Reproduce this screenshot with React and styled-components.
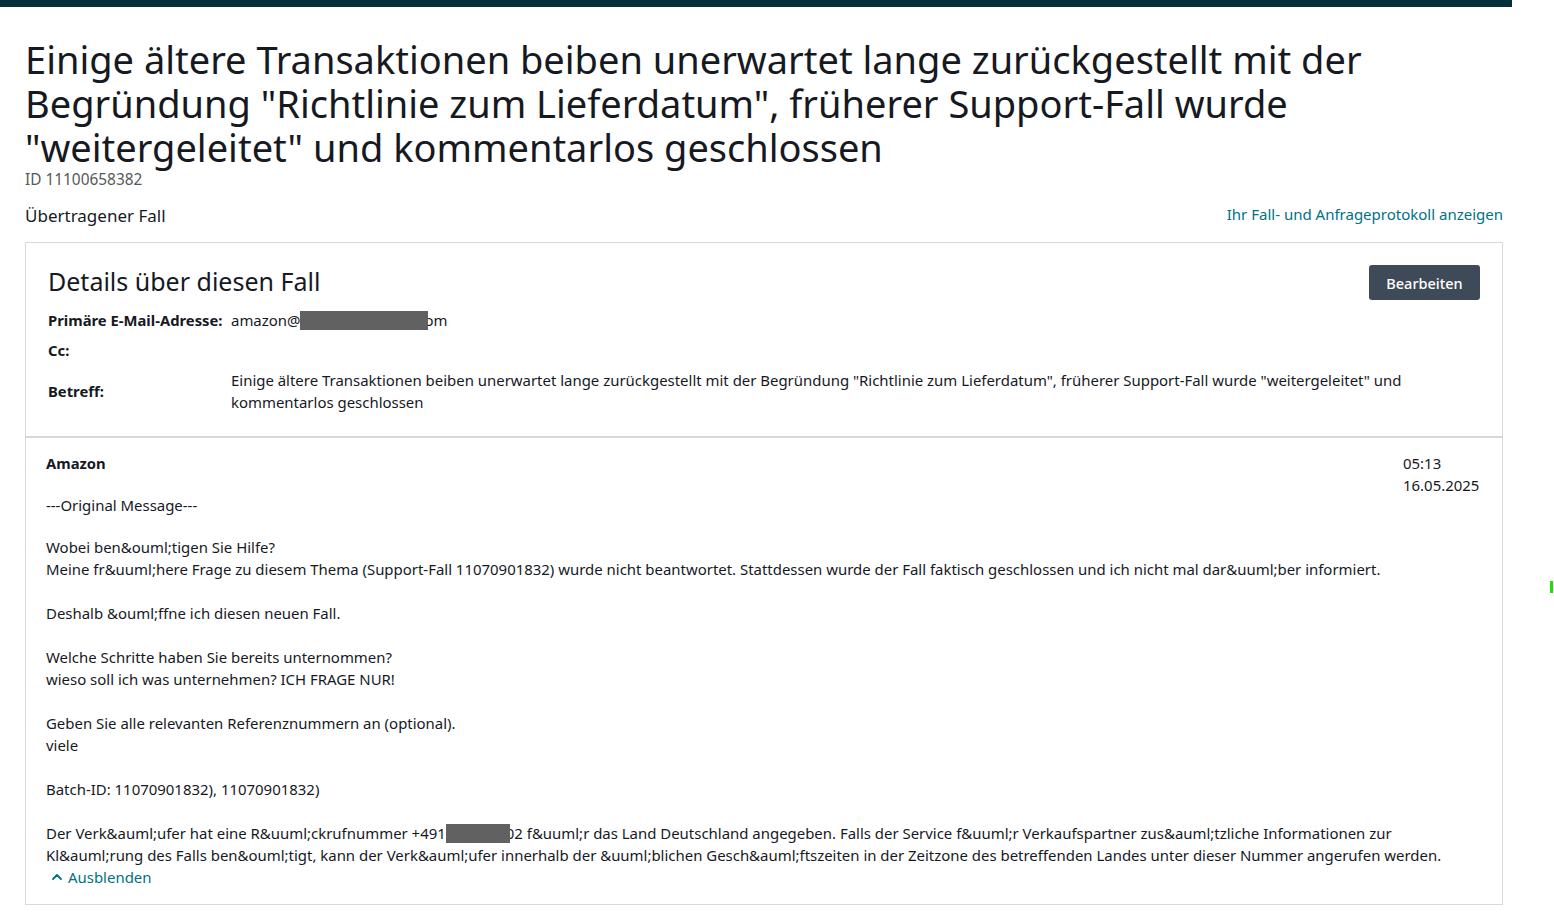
import React from "react";
import styled, { createGlobalStyle } from "styled-components";

const GlobalStyle = createGlobalStyle`
  body {
    margin: 0;
    background: #ffffff;
    font-family: "Noto Sans", "Liberation Sans", sans-serif;
    color: #16191f;
  }
`;

const fields = [
  { label: "Primäre E-Mail-Adresse:", value: "email" },
  { label: "Cc:", value: "" },
  {
    label: "Betreff:",
    value:
      'Einige ältere Transaktionen beiben unerwartet lange zurückgestellt mit der Begründung "Richtlinie zum Lieferdatum", früherer Support-Fall wurde "weitergeleitet" und kommentarlos geschlossen',
  },
];

const App = () => {
  return (
    <>
      <GlobalStyle />
      <TopBar />
      <Page>
        <Title>
          Einige ältere Transaktionen beiben unerwartet lange zurückgestellt mit der
          Begründung "Richtlinie zum Lieferdatum", früherer Support-Fall wurde
          "weitergeleitet" und kommentarlos geschlossen
        </Title>
        <CaseId>ID 11100658382</CaseId>
        <SubRow>
          <Status>Übertragener Fall</Status>
          <Link href="#">Ihr Fall- und Anfrageprotokoll anzeigen</Link>
        </SubRow>

        <Card>
          <CardHead>
            <HeadRow>
              <CardTitle>Details über diesen Fall</CardTitle>
              <EditButton>Bearbeiten</EditButton>
            </HeadRow>
            <Fields>
              {fields.map((f) => (
                <React.Fragment key={f.label}>
                  <FieldLabel>{f.label}</FieldLabel>
                  <FieldValue>
                    {f.value === "email" ? (
                      <>
                        amazon@<Redact $w={128} />om
                      </>
                    ) : (
                      f.value
                    )}
                  </FieldValue>
                </React.Fragment>
              ))}
            </Fields>
          </CardHead>

          <Message>
            <MessageHead>
              <Sender>Amazon</Sender>
              <Stamp>
                <div>05:13</div>
                <div>16.05.2025</div>
              </Stamp>
            </MessageHead>
            <Quote>---Original Message---</Quote>
            <Body>
              {`Wobei ben&ouml;tigen Sie Hilfe?
Meine fr&uuml;here Frage zu diesem Thema (Support-Fall 11070901832) wurde nicht beantwortet. Stattdessen wurde der Fall faktisch geschlossen und ich nicht mal dar&uuml;ber informiert.

Deshalb &ouml;ffne ich diesen neuen Fall.

Welche Schritte haben Sie bereits unternommen?
wieso soll ich was unternehmen? ICH FRAGE NUR!

Geben Sie alle relevanten Referenznummern an (optional).
viele

Batch-ID: 11070901832), 11070901832)

Der Verk&auml;ufer hat eine R&uuml;ckrufnummer +491`}
              <Redact $w={64} />
              {`02 f&uuml;r das Land Deutschland angegeben. Falls der Service f&uuml;r Verkaufspartner zus&auml;tzliche Informationen zur Kl&auml;rung des Falls ben&ouml;tigt, kann der Verk&auml;ufer innerhalb der &uuml;blichen Gesch&auml;ftszeiten in der Zeitzone des betreffenden Landes unter dieser Nummer angerufen werden.`}
            </Body>
            <Toggle href="#">
              <svg width="12" height="12" viewBox="0 0 12 12" fill="none">
                <path
                  d="M2 8 L6 4 L10 8"
                  stroke="#007185"
                  strokeWidth="1.8"
                  strokeLinecap="round"
                  strokeLinejoin="round"
                />
              </svg>
              Ausblenden
            </Toggle>
          </Message>
        </Card>
      </Page>
      <EdgeMark />
    </>
  );
};

export default App;

const TopBar = styled.div`
  width: 1512px;
  height: 7px;
  background: #02303a;
`;

const Page = styled.div`
  width: 1478px;
  padding: 0 9px 40px 25px;
`;

const Title = styled.h1`
  margin: 30px 0 0;
  font-size: 38px;
  line-height: 44px;
  font-weight: 400;
  color: #16191f;
`;

const CaseId = styled.div`
  margin-top: 1px;
  font-size: 15.4px;
  line-height: 20px;
  color: #565959;
`;

const SubRow = styled.div`
  display: flex;
  justify-content: space-between;
  align-items: center;
  margin-top: 15px;
`;

const Status = styled.div`
  font-size: 17px;
  line-height: 22px;
`;

const Link = styled.a`
  font-size: 15px;
  line-height: 20px;
  color: #007185;
  text-decoration: none;
  margin-top: -4px;
`;

const Card = styled.div`
  margin-top: 15px;
  border: 1px solid #d5d9d9;
`;

const CardHead = styled.div`
  padding: 22px 22px 23px 22px;
  border-bottom: 2px solid #d5d9d9;
`;

const HeadRow = styled.div`
  display: flex;
  justify-content: space-between;
  align-items: center;
`;

const CardTitle = styled.h2`
  margin: -2px 0 0;
  font-size: 25px;
  line-height: 35px;
  font-weight: 400;
`;

const EditButton = styled.button`
  height: 35px;
  width: 111px;
  border: none;
  border-radius: 3px;
  background: #3f4a59;
  color: #ffffff;
  font-family: inherit;
  font-size: 14.5px;
  font-weight: 500;
  cursor: pointer;
`;

const Fields = styled.div`
  display: grid;
  grid-template-columns: 183px 1fr;
  row-gap: 8px;
  margin-top: 9px;
  align-items: center;
`;

const FieldLabel = styled.div`
  font-size: 14.8px;
  line-height: 22px;
  font-weight: 700;
`;

const FieldValue = styled.div`
  font-size: 14.95px;
  line-height: 22px;
  min-height: 22px;
  padding-right: 55px;
`;

const Redact = styled.span`
  display: inline-block;
  position: relative;
  width: ${(p) => p.$w}px;
  height: 19px;
  margin-right: -4px;
  vertical-align: -4px;
  background: #616161;
`;

const Message = styled.div`
  padding: 14px 20px 16px 20px;
  font-size: 14.95px;
  line-height: 22px;
`;

const MessageHead = styled.div`
  display: flex;
  justify-content: space-between;
  align-items: flex-start;
  height: 22px;
`;

const Sender = styled.div`
  font-size: 14.8px;
  font-weight: 700;
`;

const Stamp = styled.div`
  width: 79px;
`;

const Quote = styled.div`
  margin-top: 20px;
`;

const Body = styled.div`
  margin-top: 20px;
  white-space: pre-line;
`;

const Toggle = styled.a`
  display: inline-flex;
  align-items: center;
  gap: 5px;
  margin-left: 5px;
  color: #007185;
  text-decoration: none;
`;

const EdgeMark = styled.div`
  position: fixed;
  left: 1550px;
  top: 581px;
  width: 3px;
  height: 12px;
  background: #22e000;
`;
